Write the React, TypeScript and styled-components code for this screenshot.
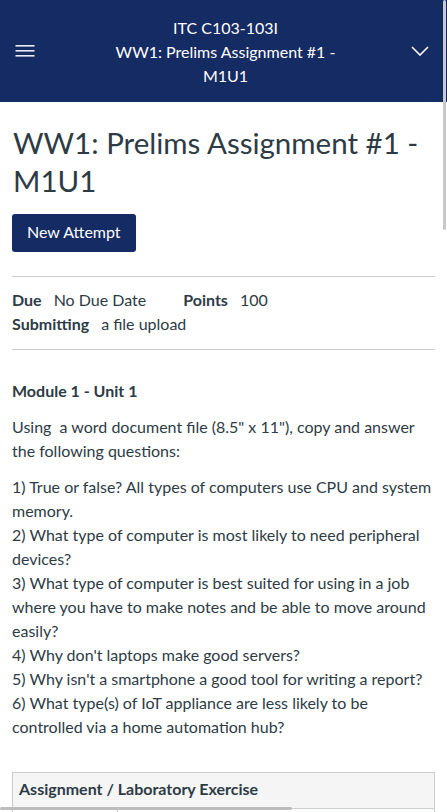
import React from "react";
import styled, { createGlobalStyle } from "styled-components";

const Global = createGlobalStyle`
  html, body { margin: 0; padding: 0; background: #fff; }
  body { font-family: Lato, "Noto Sans", "Liberation Sans", sans-serif; color: #2d3b45; -webkit-font-smoothing: antialiased; }
  * { box-sizing: border-box; }
`;

const Page = styled.div`
  width: 447px;
  min-height: 812px;
  overflow: hidden;
`;

const TopBar = styled.header`
  background: #152b63;
  color: #fff;
  height: 102px;
  display: flex;
  align-items: center;
  padding: 0 16px 0 14px;
`;

const IconBtn = styled.button`
  background: none;
  border: 0;
  padding: 0;
  width: 22px;
  display: flex;
  align-items: center;
  justify-content: center;
  color: #fff;
`;

const TitleStack = styled.div`
  flex: 1;
  text-align: center;
  font-size: 16px;
  line-height: 24px;
  padding: 0 62px 0 68px;
  margin-top: 1px;
`;

const Content = styled.main`
  padding: 0 12px;
`;

const H1 = styled.h1`
  font-size: 29.5px;
  font-weight: 400;
  line-height: 38px;
  margin: 22px 0 0 1px;
`;

const PrimaryBtn = styled.button`
  margin-top: 14px;
  background: #152b63;
  color: #fff;
  border: 0;
  border-radius: 3px;
  font-family: inherit;
  font-size: 16px;
  height: 38px;
  padding: 0 15px 3px;
`;

const Rule = styled.hr<{ $top: number }>`
  border: 0;
  border-top: 1px solid #c7cdd1;
  margin: ${(p) => p.$top}px 0 0;
`;

const Details = styled.div`
  padding: 11px 0 13px;
  font-size: 16px;
  line-height: 24px;
`;

const DetailRow = styled.div`
  display: flex;
`;

const Item = styled.span<{ $gap: number }>`
  margin-right: ${(p) => p.$gap}px;
  b { font-weight: 700; margin-right: 12px; }
`;

const Description = styled.section`
  font-size: 16px;
  line-height: 24px;
  padding-top: 29px;
`;

const Subhead = styled.p`
  font-weight: 700;
  margin: 0 0 12px;
`;

const Para = styled.p`
  margin: 0 0 12px;
`;

const TableWrap = styled.div`
  margin-top: 33px;
  border: 1px solid #c7cdd1;
  border-bottom: 0;
`;

const TH = styled.div`
  background: #f5f5f5;
  font-weight: 700;
  font-size: 16px;
  line-height: 24px;
  padding: 4px 6px 7px;
  border-bottom: 1px solid #c7cdd1;
`;

const TRow = styled.div`
  display: grid;
  grid-template-columns: 104px 1fr;
  height: 20px;
  div + div { border-left: 1px solid #c7cdd1; }
`;

const VScroll = styled.div`
  position: fixed;
  top: 0;
  left: 443px;
  width: 3px;
  height: 230px;
  background: #c9c9c9;
  border-radius: 2px;
`;

const HScroll = styled.div`
  position: fixed;
  top: 807px;
  left: 0;
  width: 292px;
  height: 3px;
  background: #bdbdbd;
  border-radius: 2px;
`;

export default function App() {
  return (
    <Page>
      <Global />
      <TopBar>
        <IconBtn aria-label="menu">
          <svg width="20" height="12" viewBox="0 0 20 12">
            <rect x="0.5" y="0" width="19" height="1.6" fill="#e8ebf2" />
            <rect x="0.5" y="5" width="19" height="1.6" fill="#e8ebf2" />
            <rect x="0.5" y="10" width="19" height="1.6" fill="#e8ebf2" />
          </svg>
        </IconBtn>
        <TitleStack>
          <div>ITC C103-103I</div>
          <div>WW1: Prelims Assignment #1 - M1U1</div>
        </TitleStack>
        <IconBtn aria-label="expand">
          <svg width="18" height="10" viewBox="0 0 18 10">
            <path d="M1 1 L9 9 L17 1" fill="none" stroke="#fff" strokeWidth="1.6" />
          </svg>
        </IconBtn>
      </TopBar>
      <Content>
        <H1>WW1: Prelims Assignment #1 - M1U1</H1>
        <PrimaryBtn>New Attempt</PrimaryBtn>
        <Rule $top={24} />
        <Details>
          <DetailRow>
            <Item $gap={37}><b>Due</b>No Due Date</Item>
            <Item $gap={0}><b>Points</b>100</Item>
          </DetailRow>
          <DetailRow>
            <Item $gap={0}><b>Submitting</b>a file upload</Item>
          </DetailRow>
        </Details>
        <Rule $top={0} />
        <Description>
          <Subhead>Module 1 - Unit 1</Subhead>
          <Para>Using&nbsp; a word document file (8.5" x 11"), copy and answer the following questions:</Para>
          <Para>
            1) True or false? All types of computers use CPU and system memory.<br />
            2) What type of computer is most likely to need peripheral devices?<br />
            3) What type of computer is best suited for using in a job where you have to make notes and be able to move around easily?<br />
            4) Why don't laptops make good servers?<br />
            5) Why isn't a smartphone a good tool for writing a report?<br />
            6) What type(s) of IoT appliance are less likely to be controlled via a home automation hub?
          </Para>
          <TableWrap>
            <TH>Assignment / Laboratory Exercise</TH>
            <TRow><div /><div /></TRow>
          </TableWrap>
        </Description>
      </Content>
      <VScroll />
      <HScroll />
    </Page>
  );
}
